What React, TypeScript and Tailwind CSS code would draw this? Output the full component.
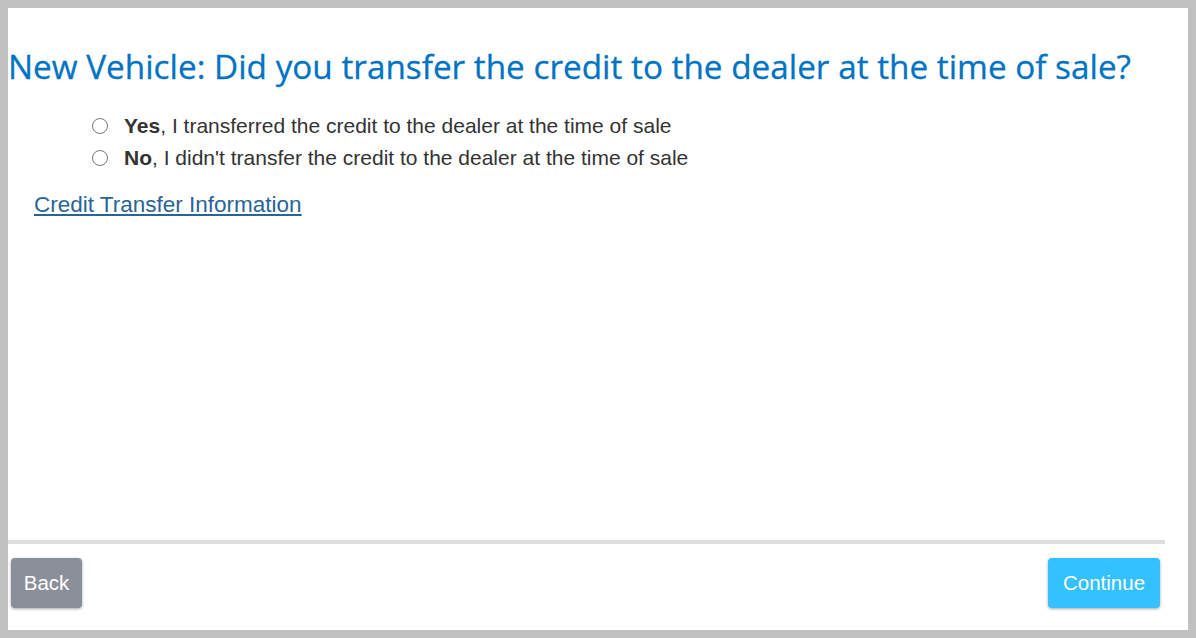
export default function App() {
  return (
    <div className="w-[1196px] h-[638px] bg-[#c0c0c0] p-2 overflow-hidden">
      <div className="h-full bg-white flex flex-col pr-[23px]">
        <h1 className="mt-[38px] text-[33.3px] leading-[40px] text-[#0073c4] font-['Open_Sans',sans-serif] [-webkit-text-stroke:0.3px_#0073c4]">
          New Vehicle: Did you transfer the credit to the dealer at the time of sale?
        </h1>
        <div className="mt-[24px] pl-[84px] font-['Liberation_Sans',Arial,sans-serif] text-[21px] text-[#333] flex flex-col">
          {[
            ["Yes", ", I transferred the credit to the dealer at the time of sale"],
            ["No", ", I didn't transfer the credit to the dealer at the time of sale"],
          ].map(([b, t]) => (
            <label key={b} className="flex items-center h-[32px]">
              <span className="w-[16px] h-[16px] rounded-full border border-[#777] bg-white mr-[16px]" />
              <span>
                <b>{b}</b>
                {t}
              </span>
            </label>
          ))}
        </div>
        <a className="mt-[14px] ml-[26px] self-start font-['Liberation_Sans',Arial,sans-serif] text-[22.5px] text-[#2a6496] underline">
          Credit Transfer Information
        </a>
        <div className="flex-1" />
        <div className="h-[4px] bg-[#dddddd]" />
        <div className="flex justify-between items-start pt-[14px] pb-[22px] pl-[3px] pr-[5px] font-['Liberation_Sans',Arial,sans-serif] text-[20.5px] text-white">
          <button className="h-[50px] w-[71px] rounded-[4px] bg-[#8b8f99] shadow-[0_1px_3px_rgba(0,0,0,0.35)]">Back</button>
          <button className="h-[50px] w-[112px] rounded-[4px] bg-[#33c2ff] shadow-[0_1px_3px_rgba(0,0,0,0.35)]">Continue</button>
        </div>
      </div>
    </div>
  );
}
